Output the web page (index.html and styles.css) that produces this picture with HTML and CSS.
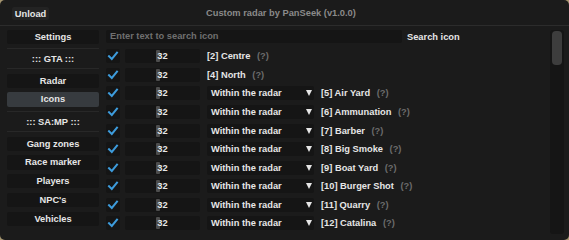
FILE: index.html
```html
<!DOCTYPE html>
<html>
<head>
<meta charset="utf-8">
<link rel="stylesheet" href="styles.css">
</head>
<body>
<div class="win">
  <div class="titlebar">
    <div class="btn unload">Unload</div>
    <div class="title">Custom radar by PanSeek (v1.0.0)</div>
  </div>
  <div class="body">
    <nav class="side">
      <div class="sbtn">Settings</div>
      <div class="sep"></div>
      <div class="stext">::: GTA :::</div>
      <div class="sep"></div>
      <div class="sbtn">Radar</div>
      <div class="sbtn active">Icons</div>
      <div class="sep"></div>
      <div class="stext">::: SA:MP :::</div>
      <div class="sep"></div>
      <div class="sbtn">Gang zones</div>
      <div class="sbtn">Race marker</div>
      <div class="sbtn">Players</div>
      <div class="sbtn">NPC's</div>
      <div class="sbtn">Vehicles</div>
    </nav>
    <main class="content">
      <div class="search">
        <div class="input">Enter text to search icon</div>
        <span class="slabel">Search icon</span>
      </div>
      <div class="rows">
        <div class="row">
          <div class="check"><svg viewBox="0 0 14 14" width="14" height="14"><polyline points="3,7.2 5.8,10 11,3.6" /></svg></div>
          <div class="slider"><div class="grab"></div><span>32</span></div>
          <div class="label nocombo">[2] Centre <i>(?)</i></div>
        </div>
        <div class="row">
          <div class="check"><svg viewBox="0 0 14 14" width="14" height="14"><polyline points="3,7.2 5.8,10 11,3.6" /></svg></div>
          <div class="slider"><div class="grab"></div><span>32</span></div>
          <div class="label nocombo">[4] North <i>(?)</i></div>
        </div>
        <div class="row">
          <div class="check"><svg viewBox="0 0 14 14" width="14" height="14"><polyline points="3,7.2 5.8,10 11,3.6" /></svg></div>
          <div class="slider"><div class="grab"></div><span>32</span></div>
          <div class="combo"><span>Within the radar</span><b class="arrow"></b></div>
          <div class="label">[5] Air Yard <i>(?)</i></div>
        </div>
        <div class="row">
          <div class="check"><svg viewBox="0 0 14 14" width="14" height="14"><polyline points="3,7.2 5.8,10 11,3.6" /></svg></div>
          <div class="slider"><div class="grab"></div><span>32</span></div>
          <div class="combo"><span>Within the radar</span><b class="arrow"></b></div>
          <div class="label">[6] Ammunation <i>(?)</i></div>
        </div>
        <div class="row">
          <div class="check"><svg viewBox="0 0 14 14" width="14" height="14"><polyline points="3,7.2 5.8,10 11,3.6" /></svg></div>
          <div class="slider"><div class="grab"></div><span>32</span></div>
          <div class="combo"><span>Within the radar</span><b class="arrow"></b></div>
          <div class="label">[7] Barber <i>(?)</i></div>
        </div>
        <div class="row">
          <div class="check"><svg viewBox="0 0 14 14" width="14" height="14"><polyline points="3,7.2 5.8,10 11,3.6" /></svg></div>
          <div class="slider"><div class="grab"></div><span>32</span></div>
          <div class="combo"><span>Within the radar</span><b class="arrow"></b></div>
          <div class="label">[8] Big Smoke <i>(?)</i></div>
        </div>
        <div class="row">
          <div class="check"><svg viewBox="0 0 14 14" width="14" height="14"><polyline points="3,7.2 5.8,10 11,3.6" /></svg></div>
          <div class="slider"><div class="grab"></div><span>32</span></div>
          <div class="combo"><span>Within the radar</span><b class="arrow"></b></div>
          <div class="label">[9] Boat Yard <i>(?)</i></div>
        </div>
        <div class="row">
          <div class="check"><svg viewBox="0 0 14 14" width="14" height="14"><polyline points="3,7.2 5.8,10 11,3.6" /></svg></div>
          <div class="slider"><div class="grab"></div><span>32</span></div>
          <div class="combo"><span>Within the radar</span><b class="arrow"></b></div>
          <div class="label">[10] Burger Shot <i>(?)</i></div>
        </div>
        <div class="row">
          <div class="check"><svg viewBox="0 0 14 14" width="14" height="14"><polyline points="3,7.2 5.8,10 11,3.6" /></svg></div>
          <div class="slider"><div class="grab"></div><span>32</span></div>
          <div class="combo"><span>Within the radar</span><b class="arrow"></b></div>
          <div class="label">[11] Quarry <i>(?)</i></div>
        </div>
        <div class="row">
          <div class="check"><svg viewBox="0 0 14 14" width="14" height="14"><polyline points="3,7.2 5.8,10 11,3.6" /></svg></div>
          <div class="slider"><div class="grab"></div><span>32</span></div>
          <div class="combo"><span>Within the radar</span><b class="arrow"></b></div>
          <div class="label">[12] Catalina <i>(?)</i></div>
        </div>
      </div>
    </main>
    <div class="scroll"><div class="thumb"></div></div>
  </div>
</div>
</body>
</html>
```
FILE: styles.css
```css
html, body {
  margin: 0;
  padding: 0;
  background: #a69670;
}
body {
  width: 569px;
  height: 240px;
  overflow: hidden;
  font-family: "Liberation Sans", Arial, sans-serif;
  font-weight: bold;
  font-size: 9.3px;
  color: #e6e6e6;
}
.win {
  width: 569px;
  height: 240px;
  background: #1b1b1b;
  border-radius: 5px;
  overflow: hidden;
  box-sizing: border-box;
}
.titlebar {
  height: 25px;
  border-bottom: 1px solid #2c2c2c;
  display: flex;
  align-items: flex-start;
  box-sizing: content-box;
}
.btn {
  background: #232323;
  border-radius: 2px;
  display: flex;
  align-items: center;
  justify-content: center;
}
.unload {
  margin: 7px 0 0 12px;
  width: 37px;
  height: 13px;
}
.title {
  margin: 8px 0 0 157px;
  color: #8a8a8a;
  line-height: 11px;
}
.body {
  display: flex;
  padding: 4px 0 0 7px;
  height: 210px;
}
.side {
  width: 92px;
  display: flex;
  flex-direction: column;
  gap: 4.5px;
}
.sbtn {
  height: 14.25px;
  background: #151515;
  border-radius: 2px;
  display: flex;
  align-items: center;
  justify-content: center;
  flex-shrink: 0;
}
.sbtn:first-child {
  height: 13.5px;
}
.sbtn.active {
  background: #373b3f;
}
.sep {
  height: 1px;
  background: #282828;
  flex-shrink: 0;
}
.stext {
  height: 10px;
  line-height: 10px;
  text-align: center;
  flex-shrink: 0;
}
.content {
  margin-left: 7px;
  width: 437px;
  overflow: hidden;
  height: 204px;
}
.search {
  display: flex;
  align-items: center;
  height: 13px;
}
.input {
  width: 292px;
  height: 13px;
  padding-left: 4px;
  background: #151515;
  border-radius: 2px;
  color: #6f6f6f;
  line-height: 13px;
}
.slabel {
  margin-left: 5px;
}
.rows {
  margin-top: 6px;
  display: flex;
  flex-direction: column;
  gap: 4.35px;
}
.row {
  display: flex;
  align-items: center;
  height: 14.25px;
  flex-shrink: 0;
}
.check {
  width: 14px;
  height: 14px;
  background: #151515;
  border-radius: 2px;
  flex-shrink: 0;
}
.check svg {
  display: block;
}
.check polyline {
  fill: none;
  stroke: #3d9bdb;
  stroke-width: 2;
  stroke-linecap: square;
}
.slider {
  margin-left: 5px;
  width: 75px;
  height: 14px;
  background: #151515;
  border-radius: 2px;
  position: relative;
  display: flex;
  align-items: center;
  justify-content: center;
  flex-shrink: 0;
}
.slider span {
  position: relative;
}
.grab {
  position: absolute;
  left: 31px;
  top: 1px;
  width: 4px;
  height: 12px;
  background: #4d4d4d;
  border-radius: 1px;
}
.combo {
  margin-left: 7px;
  width: 107px;
  height: 14px;
  background: #151515;
  border-radius: 2px;
  display: flex;
  align-items: center;
  justify-content: space-between;
  padding: 0 2px 0 4px;
  box-sizing: border-box;
  flex-shrink: 0;
}
.arrow {
  width: 0;
  height: 0;
  border-left: 3.5px solid transparent;
  border-right: 3.5px solid transparent;
  border-top: 6px solid #e6e6e6;
  margin-right: 0.5px;
}
.label {
  margin-left: 7px;
  white-space: nowrap;
}
.label.nocombo {
  margin-left: 7px;
}
.label i {
  font-style: normal;
  color: #6c6c6c;
  margin-left: 4px;
}
.scroll {
  margin-left: 7px;
  width: 14px;
  height: 204px;
  background: #151515;
  border-radius: 3px;
  flex-shrink: 0;
  padding-top: 1px;
  box-sizing: border-box;
}
.thumb {
  margin-left: 2px;
  width: 10px;
  height: 34px;
  background: #3d3d3d;
  border-radius: 4px;
}
```
